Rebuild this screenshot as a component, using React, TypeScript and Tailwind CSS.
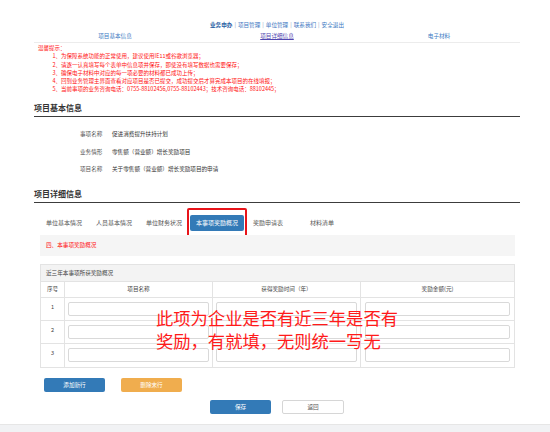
const navLinks = ['项目管理', '单位管理', '联系我们', '安全退出'];

const notes = [
  '为保障系统功能的正常使用，建议使用IE11或谷歌浏览器；',
  '请逐一认真填写每个表单中信息项并保存，即使没有填写数据也需要保存；',
  '确保电子材料中对应的每一项必要的材料都已成功上传；',
  '回到业务管理主界面查看对应项目是否已提交，成功提交后才算完成本项目的在线填报；',
  '当前事项的业务咨询电话：0755-88102456,0755-88102443；技术咨询电话：88102445；',
];

const fields = [
  ['事项名称', '促进消费提升扶持计划'],
  ['业务情形', '零售额（营业额）增长奖励项目'],
  ['项目名称', '关于零售额（营业额）增长奖励项目的申请'],
];

const tabs = ['单位基本情况', '人员基本情况', '单位财务状况', '本事项奖励概况', '奖励申请表', '材料清单'];

function Heading({ children }: { children: string }) {
  return (
    <div className="border-b-[1.5px] border-[#3c3c3c] pb-[2px] text-[8px] font-bold leading-[12px] text-[#333]">
      {children}
    </div>
  );
}

function Cell({ children }: { children?: React.ReactNode }) {
  return <div className="h-full border-r border-[#e3e3e3] last:border-r-0">{children}</div>;
}

function InputBox() {
  return <div className="h-[14px] rounded-[2px] border border-[#d9d9d9] bg-white" />;
}

export default function App() {
  return (
    <div className="relative h-[432px] w-[550px] overflow-hidden bg-white font-['Noto_Sans_CJK_SC',sans-serif] text-[#333]">
      <div className="ml-[34px] w-[486px] pt-[21px]">
        {/* top nav */}
        <div className="flex items-center justify-center gap-[2px] text-[5.6px] leading-[8px] text-[#3d78c2]">
          <span className="font-bold text-[#2a5ea3]">业务申办</span>
          {navLinks.map((l) => (
            <span key={l} className="flex gap-[2px]">
              <span className="text-[#8aa3c4]">|</span>
              <span>{l}</span>
            </span>
          ))}
        </div>
        <div className="mt-[3px] grid grid-cols-3 border-b border-[#ececec] pb-[2px] text-center text-[5.6px] leading-[8px] text-[#3d7cc4]">
          <span>项目基本信息</span>
          <span className="text-[#5146b0] underline">项目详细信息</span>
          <span>电子材料</span>
        </div>

        {/* notice */}
        <div className="mt-px text-[5.5px] leading-[8.3px] text-[#ff1010]">
          <div className="pl-[4px]">温馨提示：</div>
          {notes.map((n, i) => (
            <div key={i} className="pl-[18.5px]">
              {i + 1}、{n}
            </div>
          ))}
        </div>

        <div className="mt-[8px]">
          <Heading>项目基本信息</Heading>
        </div>
        <div className="mt-[13.5px] flex flex-col gap-[9.5px] pl-[46px] text-[5.6px] leading-[8px]">
          {fields.map(([k, v]) => (
            <div key={k} className="flex">
              <span className="w-[32px] text-[#555]">{k}</span>
              <span className="text-[#333]">{v}</span>
            </div>
          ))}
        </div>

        <div className="mt-[15px]">
          <Heading>项目详细信息</Heading>
        </div>

        {/* sub tabs */}
        <div className="mt-[12px] flex pl-[5px] text-[6px] leading-[16px] text-[#555]">
          {tabs.map((t) =>
            t === '本事项奖励概况' ? (
              <div key={t} className="relative mx-[1px] rounded-[2px] bg-[#337ab7] px-[6px] text-white">
                {t}
                <div className="absolute -bottom-[10px] -left-[3px] -right-[3px] -top-[7px] rounded-[2px] border-2 border-[#e8141a]" />
              </div>
            ) : t === '奖励申请表' ? (
              <div key={t} className="pl-[8px] pr-[20px]">
                {t}
              </div>
            ) : (
              <div key={t} className="px-[7px]">
                {t}
              </div>
            ),
          )}
        </div>

        <div className="relative mr-[5px] ml-[6px]">
          <div className="mt-[4px] h-[21px] bg-[#f5f5f5] pl-[6px] text-[5.6px] leading-[21px] text-[#ff1010]">
            四、本事项奖励概况
          </div>

          {/* table */}
          <div className="mt-[8px] border border-[#e3e3e3] text-[5.6px] text-[#444]">
            <div className="h-[17px] border-b border-[#e3e3e3] bg-[#f3f3f3] pl-[5px] leading-[16px]">
              近三年本事项所获奖励概况
            </div>
            <div className="grid h-[16px] grid-cols-[24px_148px_148px_1fr] border-b border-[#e3e3e3] text-center leading-[15px]">
              <Cell>序号</Cell>
              <Cell>项目名称</Cell>
              <Cell>获得奖励时间（年）</Cell>
              <Cell>奖励金额(元)</Cell>
            </div>
            {[1, 2, 3].map((n) => (
              <div
                key={n}
                className="grid h-[23px] grid-cols-[24px_148px_148px_1fr] border-b border-[#e3e3e3] last:border-b-0"
              >
                <Cell>
                  <div className="pt-[5px] text-center leading-[8px]">{n}</div>
                </Cell>
                <Cell>
                  <div className="px-[3px] pt-[4px]">
                    <InputBox />
                  </div>
                </Cell>
                <Cell>
                  <div className="px-[3px] pt-[4px]">
                    <InputBox />
                  </div>
                </Cell>
                <Cell>
                  <div className="px-[4px] pt-[4px]">
                    <InputBox />
                  </div>
                </Cell>
              </div>
            ))}
          </div>

          <div className="absolute left-[116px] top-[71px] whitespace-nowrap text-[17.3px] leading-[23px] text-[#ff1a1a]">
            <div>此项为企业是否有近三年是否有</div>
            <div>奖励，有就填，无则统一写无</div>
          </div>
        </div>

        {/* row buttons */}
        <div className="mt-[10px] flex gap-[16px] pl-[10px] text-[5.6px] leading-[14px] text-white">
          <div className="h-[14px] w-[61px] rounded-[2px] bg-[#337ab7] text-center">添加新行</div>
          <div className="h-[14px] w-[61px] rounded-[2px] bg-[#f0ad4e] text-center">删除末行</div>
        </div>

        <div className="mt-[8px] flex justify-center gap-[11px] text-[5.6px] leading-[14px]">
          <div className="h-[14px] w-[61px] rounded-[2px] bg-[#337ab7] text-center text-white">保存</div>
          <div className="h-[14px] w-[62px] rounded-[2px] border border-[#d6d6d6] bg-white text-center leading-[12px] text-[#555]">
            返回
          </div>
        </div>
      </div>

      <div className="absolute bottom-0 left-0 right-0 h-[8px] border-t border-[#e6e6e6] bg-[#f1f2f4]" />
    </div>
  );
}
